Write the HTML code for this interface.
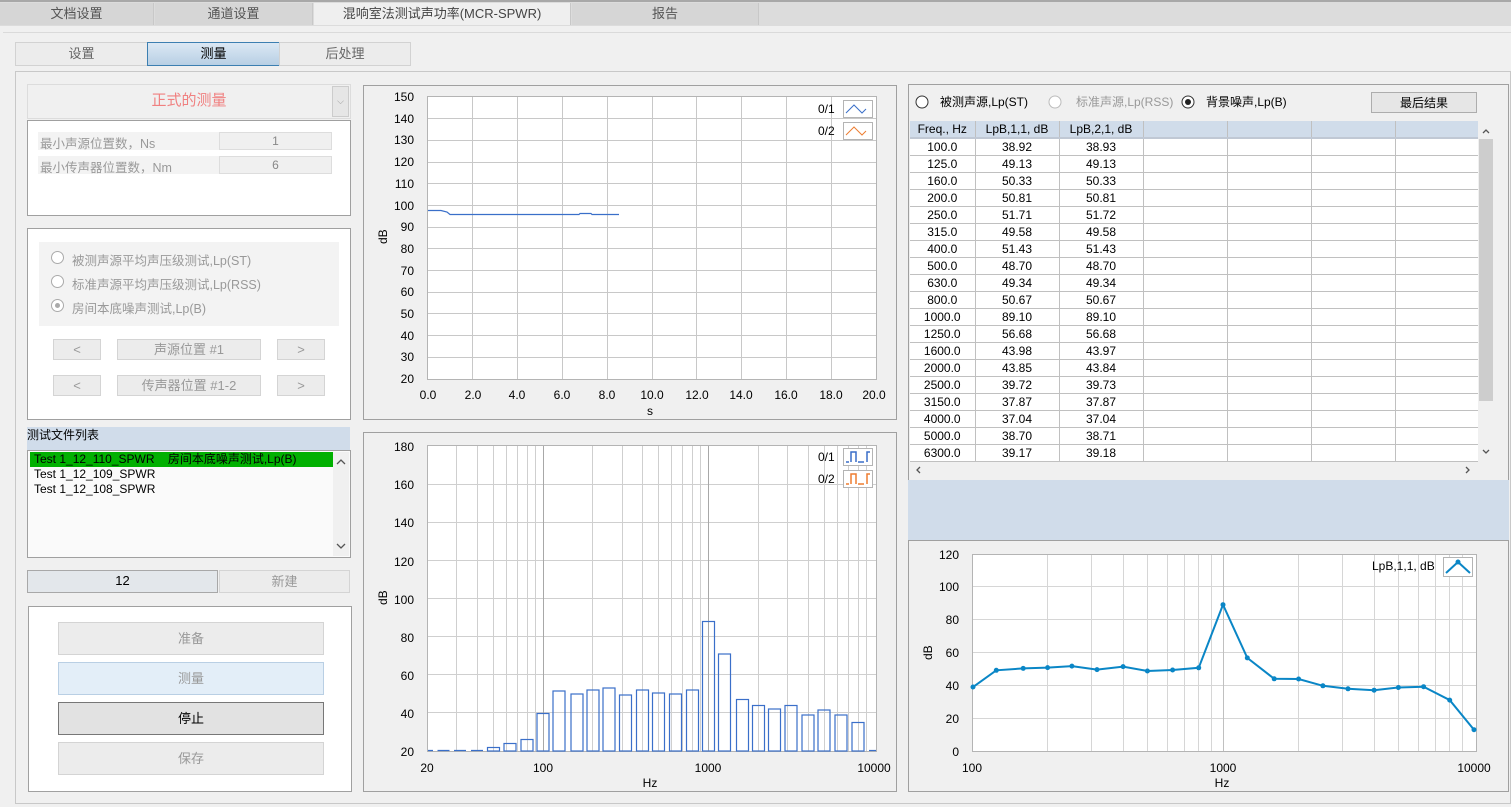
<!DOCTYPE html>
<html><head><meta charset="utf-8"><style>
*{box-sizing:border-box;margin:0;padding:0}
body{width:1511px;height:807px;background:#f0f0f0;font-family:"Liberation Sans","Noto Sans CJK SC",sans-serif;font-size:12px;color:#000;position:relative;overflow:hidden}
.a{position:absolute}
.tab{position:absolute;top:3px;height:22px;background:#d6d6d6;border-right:1px solid #c8c8c8;color:#555;font-size:13px;text-align:center;line-height:22px}
.st{position:absolute;top:42px;height:24px;background:#ececec;border:1px solid #d2d2d2;color:#666;font-size:13px;text-align:center;line-height:22px}
.box{position:absolute;background:#fff;border:1px solid #a0a0a0}
.btn{position:absolute;background:#ececec;border:1px solid #d4d4d4;color:#999;text-align:center;font-size:13px}
.rad{position:absolute;width:13px;height:13px;border:1px solid #aaa;border-radius:50%;background:#fff}
.g{color:#999;font-size:12.5px}
.panel{position:absolute;border:1px solid #a0a0a0;background:#f0f0f0}
svg text{font-family:"Liberation Sans",sans-serif;font-size:12px;fill:#000}
table{border-collapse:collapse}
td{border-right:1px solid #c0c0c0;border-bottom:1px solid #c0c0c0;height:17px;text-align:center;font-size:12px;padding:0;line-height:16px}
</style></head><body>
<div class="a" style="left:0;top:0;width:1511px;height:2px;background:#a8a8a8"></div>
<div class="a" style="left:0;top:2px;width:1511px;height:24px;background:#dcdcdc"></div>
<div class="tab" style="left:0;width:154px">文档设置</div>
<div class="tab" style="left:155px;width:158px">通道设置</div>
<div class="tab" style="left:314px;width:257px;background:#efefef;color:#444">混响室法测试声功率(MCR-SPWR)</div>
<div class="tab" style="left:572px;width:187px">报告</div>
<div class="a" style="left:3px;top:32px;width:1508px;height:775px;background:#f0f0f0;border-top:1px solid #dadada"></div>
<div class="st" style="left:15px;width:133px">设置</div>
<div class="st" style="left:147px;width:133px;background:linear-gradient(#dbe8f4,#b8cfe4);border-color:#3c7fb1;color:#000">测量</div>
<div class="st" style="left:279px;width:132px">后处理</div>
<div class="a" style="left:15px;top:71px;width:1496px;height:733px;border:1px solid #c8c8c8;background:#f0f0f0"></div>

<!-- left -->
<div class="a" style="left:27px;top:84px;width:324px;height:35px;background:#f0f0f0;border:1px solid #dcdcdc;text-align:center;line-height:32px;font-size:15px;color:#f08080">正式的测量</div>
<div class="a" style="left:332px;top:86px;width:17px;height:31px;background:#e6e6e6;border:1px solid #ccc;color:#999;text-align:center;line-height:29px;font-size:9px">⌵</div>
<div class="box" style="left:27px;top:120px;width:324px;height:96px"></div>
<div class="a" style="left:38px;top:132px;width:293px;height:18px;background:#f3f3f3"></div>
<div class="a g" style="left:40px;top:133px">最小声源位置数，Ns</div>
<div class="a" style="left:219px;top:132px;width:113px;height:18px;background:#f0f0f0;border:1px solid #ddd;text-align:center;color:#888;line-height:16px">1</div>
<div class="a" style="left:38px;top:156px;width:293px;height:18px;background:#f3f3f3"></div>
<div class="a g" style="left:40px;top:157px">最小传声器位置数，Nm</div>
<div class="a" style="left:219px;top:156px;width:113px;height:18px;background:#f0f0f0;border:1px solid #ddd;text-align:center;color:#888;line-height:16px">6</div>

<div class="box" style="left:27px;top:228px;width:324px;height:192px"></div>
<div class="a" style="left:39px;top:242px;width:300px;height:84px;background:#f3f3f3"></div>
<div class="rad" style="left:51px;top:251px"></div><div class="a g" style="left:72px;top:250px">被测声源平均声压级测试,Lp(ST)</div>
<div class="rad" style="left:51px;top:275px"></div><div class="a g" style="left:72px;top:274px">标准声源平均声压级测试,Lp(RSS)</div>
<div class="rad" style="left:51px;top:299px"></div><div class="a" style="left:55px;top:303px;width:5px;height:5px;border-radius:50%;background:#aaa"></div><div class="a g" style="left:72px;top:298px">房间本底噪声测试,Lp(B)</div>
<div class="btn" style="left:53px;top:339px;width:48px;height:21px;line-height:19px">&lt;</div>
<div class="btn" style="left:117px;top:339px;width:144px;height:21px;line-height:19px">声源位置 #1</div>
<div class="btn" style="left:277px;top:339px;width:48px;height:21px;line-height:19px">&gt;</div>
<div class="btn" style="left:53px;top:375px;width:48px;height:21px;line-height:19px">&lt;</div>
<div class="btn" style="left:117px;top:375px;width:144px;height:21px;line-height:19px">传声器位置 #1-2</div>
<div class="btn" style="left:277px;top:375px;width:48px;height:21px;line-height:19px">&gt;</div>

<div class="a" style="left:27px;top:427px;width:323px;height:23px;background:#d0dcea;line-height:17px">测试文件列表</div>
<div class="a" style="left:27px;top:450px;width:324px;height:108px;border:1px solid #a0a0a0;background:#fafafa"></div>
<div class="a" style="left:30px;top:452px;width:303px;height:15px;background:#00b000;line-height:15px;padding-left:4px">Test 1_12_110_SPWR&nbsp;&nbsp;&nbsp;&nbsp;房间本底噪声测试,Lp(B)</div>
<div class="a" style="left:34px;top:467px;line-height:15px">Test 1_12_109_SPWR<br>Test 1_12_108_SPWR</div>
<div class="a" style="left:333px;top:452px;width:16px;height:104px;background:#f0f0f0"></div>
<svg class="a" style="left:333px;top:452px" width="16" height="104"><path d="M4 12L8 8L12 12M4 92L8 96L12 92" fill="none" stroke="#555" stroke-width="1.3"/></svg>

<div class="a" style="left:27px;top:570px;width:191px;height:23px;background:#e3e7eb;border:1px solid #a8a8a8;text-align:center;line-height:20px;font-size:13px">12</div>
<div class="btn" style="left:219px;top:570px;width:131px;height:23px;line-height:21px">新建</div>

<div class="box" style="left:28px;top:606px;width:324px;height:186px"></div>
<div class="btn" style="left:58px;top:622px;width:266px;height:33px;line-height:31px">准备</div>
<div class="btn" style="left:58px;top:662px;width:266px;height:33px;line-height:31px;background:#e3eef8;border-color:#b9cfe4">测量</div>
<div class="btn" style="left:58px;top:702px;width:266px;height:33px;line-height:31px;background:#e2e2e2;border-color:#777;color:#000">停止</div>
<div class="btn" style="left:58px;top:742px;width:266px;height:33px;line-height:31px">保存</div>

<!-- chart1 -->
<div class="panel" style="left:363px;top:85px;width:534px;height:335px"></div>
<svg class="a" style="left:0;top:0" width="1511" height="807">
<rect x="427.5" y="96.5" width="449" height="283" fill="#fff" stroke="#b4b4b4"/>
<g stroke="#c8c8c8" stroke-width="1">
<path d="M428 118.5H876M428 140.5H876M428 162.5H876M428 183.5H876M428 205.5H876M428 227.5H876M428 248.5H876M428 270.5H876M428 292.5H876M428 313.5H876M428 335.5H876M428 357.5H876"/>
<path d="M472.5 97V379M517.5 97V379M562.5 97V379M607.5 97V379M652.5 97V379M696.5 97V379M741.5 97V379M786.5 97V379M831.5 97V379"/>
</g>
<path d="M428 210.5H441L447 212L450 214.5H579L580 213.5H591L592 214.5H619" fill="none" stroke="#3a6fc9" stroke-width="1.2"/>
<g text-anchor="end"><text x="414" y="101">150</text><text x="414" y="123">140</text><text x="414" y="144">130</text><text x="414" y="166">120</text><text x="414" y="188">110</text><text x="414" y="210">100</text><text x="414" y="231">90</text><text x="414" y="253">80</text><text x="414" y="275">70</text><text x="414" y="296">60</text><text x="414" y="318">50</text><text x="414" y="340">40</text><text x="414" y="361">30</text><text x="414" y="383">20</text></g>
<g text-anchor="middle"><text x="428" y="399">0.0</text><text x="473" y="399">2.0</text><text x="517" y="399">4.0</text><text x="562" y="399">6.0</text><text x="607" y="399">8.0</text><text x="652" y="399">10.0</text><text x="697" y="399">12.0</text><text x="741" y="399">14.0</text><text x="786" y="399">16.0</text><text x="831" y="399">18.0</text><text x="874" y="399">20.0</text><text x="650" y="415">s</text></g>
<text transform="translate(387,244) rotate(-90)">dB</text>
<text x="818" y="113">0/1</text><text x="818" y="135">0/2</text>
<rect x="843.5" y="100.5" width="29" height="17" fill="#fff" stroke="#b4b4b4"/><path d="M846 113L854 105L862 113L866 109" fill="none" stroke="#3a6fc9"/>
<rect x="843.5" y="122.5" width="29" height="17" fill="#fff" stroke="#b4b4b4"/><path d="M846 135L854 127L862 135L866 131" fill="none" stroke="#ed7d31"/>

<!-- chart2 -->
<rect x="363.5" y="432.5" width="533" height="359" fill="#f0f0f0" stroke="#a0a0a0"/>
<rect x="427.5" y="445.5" width="449" height="306" fill="#fff" stroke="#b4b4b4"/>
<g stroke="#cfcfcf"><path d="M428 484.5H876M428 522.5H876M428 560.5H876M428 598.5H876M428 636.5H876M428 674.5H876M428 712.5H876"/>
<path d="M456.5 446V751M477.5 446V751M493.5 446V751M506.5 446V751M517.5 446V751M527.5 446V751M535.5 446V751M592.5 446V751M622.5 446V751M642.5 446V751M658.5 446V751M671.5 446V751M682.5 446V751M692.5 446V751M700.5 446V751M758.5 446V751M787.5 446V751M808.5 446V751M824.5 446V751M837.5 446V751M848.5 446V751M858.5 446V751M866.5 446V751"/></g>
<path d="M543.5 446V751M708.5 446V751" stroke="#a8a8a8"/>
<g fill="none" stroke="#3a6fc9" stroke-width="1.2">
<path d="M428 750.5H433M437.5 750.5H449.5M454 750.5H466M471 750.5H483"/>
<rect x="487.5" y="747.5" width="12" height="3.5"/><rect x="504" y="743.5" width="12" height="7.5"/><rect x="521" y="739.5" width="12" height="11.5"/>
<rect x="537" y="713.5" width="12" height="37.5"/><rect x="553" y="691" width="12" height="60"/><rect x="571" y="694" width="12" height="57"/><rect x="587" y="690" width="12" height="61"/><rect x="603" y="688" width="12" height="63"/><rect x="619.5" y="695" width="12" height="56"/><rect x="636.5" y="690" width="12" height="61"/><rect x="652.5" y="693" width="12" height="58"/><rect x="669.5" y="694" width="12" height="57"/><rect x="686.5" y="690" width="12" height="61"/><rect x="702.5" y="621.5" width="12" height="129.5"/><rect x="718.5" y="654" width="12" height="97"/><rect x="736.5" y="699.5" width="12" height="51.5"/><rect x="752.5" y="705.5" width="12" height="45.5"/><rect x="768.5" y="709" width="12" height="42"/><rect x="785" y="705.5" width="12" height="45.5"/><rect x="802" y="715" width="12" height="36"/><rect x="818" y="710" width="12" height="41"/><rect x="835" y="715" width="12" height="36"/><rect x="852" y="722.5" width="12" height="28.5"/><path d="M869 750.5H876"/>
</g>
<g text-anchor="end"><text x="414" y="451">180</text><text x="414" y="489">160</text><text x="414" y="527">140</text><text x="414" y="566">120</text><text x="414" y="604">100</text><text x="414" y="642">80</text><text x="414" y="680">60</text><text x="414" y="718">40</text><text x="414" y="756">20</text></g>
<g text-anchor="middle"><text x="427" y="772">20</text><text x="543" y="772">100</text><text x="708" y="772">1000</text><text x="874" y="772">10000</text><text x="650" y="787">Hz</text></g>
<text transform="translate(387,605) rotate(-90)">dB</text>
<text x="818" y="461">0/1</text><text x="818" y="483">0/2</text>
<rect x="843.5" y="448.5" width="29" height="17" fill="#fff" stroke="#b4b4b4"/><path d="M846 462H849M851 462V452H856V462M858 462H864M867 462V452H870" fill="none" stroke="#3a6fc9" stroke-width="1.5"/>
<rect x="843.5" y="470.5" width="29" height="17" fill="#fff" stroke="#b4b4b4"/><path d="M846 484H849M851 484V474H856V484M858 484H864M867 484V474H870" fill="none" stroke="#ed7d31" stroke-width="1.5"/>

<!-- right table panel -->
<rect x="908.5" y="84.5" width="600" height="396" fill="#f0f0f0" stroke="#a0a0a0"/>
<rect x="908" y="480" width="601" height="60" fill="#d0dcea"/>
<rect x="908.5" y="540.5" width="600" height="251" fill="#f0f0f0" stroke="#a0a0a0"/>
<circle cx="922" cy="102" r="6" fill="#fff" stroke="#333"/>
<text x="940" y="106">被测声源,Lp(ST)</text>
<circle cx="1055" cy="102" r="6" fill="#fff" stroke="#bbb"/>
<text x="1076" y="106" style="fill:#999">标准声源,Lp(RSS)</text>
<circle cx="1188" cy="102" r="6" fill="#fff" stroke="#333"/><circle cx="1188" cy="102" r="3" fill="#222"/>
<text x="1206" y="106">背景噪声,Lp(B)</text>
<rect x="1371.5" y="92.5" width="105" height="20" fill="#e6e6e6" stroke="#adadad"/>
<text x="1424" y="107" text-anchor="middle">最后结果</text>
<rect x="1478" y="121" width="16" height="341" fill="#f0f0f0"/>
<rect x="1479" y="139" width="14" height="262" fill="#cdcdcd"/>
<path d="M1483 133L1486 130L1489 133M1483 450L1486 453L1489 450" fill="none" stroke="#555" stroke-width="1.3"/>
<rect x="909" y="462" width="585" height="17" fill="#f0f0f0"/>
<path d="M920 467L917 470L920 473M1466 467L1469 470L1466 473" fill="none" stroke="#555" stroke-width="1.3"/>

<!-- chart3 -->
<rect x="972.5" y="554.5" width="504" height="197" fill="#fff" stroke="#b4b4b4"/>
<g stroke="#d6d6d6"><path d="M973 586.5H1476M973 619.5H1476M973 652.5H1476M973 685.5H1476M973 718.5H1476"/>
<path d="M1047.5 555V751M1091.5 555V751M1123.5 555V751M1147.5 555V751M1167.5 555V751M1184.5 555V751M1198.5 555V751M1211.5 555V751M1298.5 555V751M1342.5 555V751M1374.5 555V751M1398.5 555V751M1418.5 555V751M1435.5 555V751M1449.5 555V751M1462.5 555V751"/></g>
<path d="M1223.5 555V751" stroke="#c0c0c0"/>
<g fill="#0a86c6"><path d="M973 687.1L996.3 670.3L1023.2 668.4L1047.6 667.6L1071.9 666.1L1097 669.6L1123.1 666.6L1147.4 671L1172.6 670L1198.7 667.8L1223 604.7L1247.3 657.9L1274.2 678.8L1298.6 679L1322.9 685.8L1348 688.8L1374.1 690.2L1398.4 687.5L1423.6 686.7L1449.7 700.1L1474 729.7" fill="none" stroke="#0a86c6" stroke-width="2"/>
<circle cx="973" cy="687" r="2.5"/><circle cx="996.3" cy="670.3" r="2.5"/><circle cx="1023.2" cy="668.4" r="2.5"/><circle cx="1047.6" cy="667.6" r="2.5"/><circle cx="1071.9" cy="666.1" r="2.5"/><circle cx="1097" cy="669.6" r="2.5"/><circle cx="1123.1" cy="666.6" r="2.5"/><circle cx="1147.4" cy="671" r="2.5"/><circle cx="1172.6" cy="670" r="2.5"/><circle cx="1198.7" cy="667.8" r="2.5"/><circle cx="1223" cy="604.7" r="2.5"/><circle cx="1247.3" cy="657.9" r="2.5"/><circle cx="1274.2" cy="678.8" r="2.5"/><circle cx="1298.6" cy="679" r="2.5"/><circle cx="1322.9" cy="685.8" r="2.5"/><circle cx="1348" cy="688.8" r="2.5"/><circle cx="1374.1" cy="690.2" r="2.5"/><circle cx="1398.4" cy="687.5" r="2.5"/><circle cx="1423.6" cy="686.7" r="2.5"/><circle cx="1449.7" cy="700.1" r="2.5"/><circle cx="1474" cy="729.7" r="2.5"/></g>
<g text-anchor="end"><text x="959" y="559">120</text><text x="959" y="591">100</text><text x="959" y="624">80</text><text x="959" y="657">60</text><text x="959" y="690">40</text><text x="959" y="723">20</text><text x="959" y="756">0</text></g>
<g text-anchor="middle"><text x="972" y="772">100</text><text x="1223" y="772">1000</text><text x="1474" y="772">10000</text><text x="1222" y="787">Hz</text></g>
<text transform="translate(932,660) rotate(-90)">dB</text>
<text x="1372" y="570">LpB,1,1, dB</text>
<rect x="1443.5" y="557.5" width="29" height="19" fill="#fff" stroke="#b4b4b4"/><path d="M1446 573L1458 562L1470 573" fill="none" stroke="#0a86c6" stroke-width="2"/><circle cx="1458" cy="562" r="2.5" fill="#0a86c6"/>
</svg>

<div class="a" style="left:910px;top:121px;width:568px;height:341px;background:#fff;overflow:hidden">
<table style="width:568px;table-layout:fixed">
<colgroup><col style="width:65px"><col style="width:84px"><col style="width:84px"><col style="width:84px"><col style="width:84px"><col style="width:84px"><col style="width:83px"></colgroup>
<tr style="background:#d0dcea"><td style="border-bottom:2px solid #c0c8d4">Freq., Hz</td><td style="border-bottom:2px solid #c0c8d4">LpB,1,1, dB</td><td style="border-bottom:2px solid #c0c8d4">LpB,2,1, dB</td><td style="border-bottom:2px solid #c0c8d4"></td><td style="border-bottom:2px solid #c0c8d4"></td><td style="border-bottom:2px solid #c0c8d4"></td><td style="border-bottom:2px solid #c0c8d4"></td></tr>
<tr><td>100.0</td><td>38.92</td><td>38.93</td><td></td><td></td><td></td><td></td></tr>
<tr><td>125.0</td><td>49.13</td><td>49.13</td><td></td><td></td><td></td><td></td></tr>
<tr><td>160.0</td><td>50.33</td><td>50.33</td><td></td><td></td><td></td><td></td></tr>
<tr><td>200.0</td><td>50.81</td><td>50.81</td><td></td><td></td><td></td><td></td></tr>
<tr><td>250.0</td><td>51.71</td><td>51.72</td><td></td><td></td><td></td><td></td></tr>
<tr><td>315.0</td><td>49.58</td><td>49.58</td><td></td><td></td><td></td><td></td></tr>
<tr><td>400.0</td><td>51.43</td><td>51.43</td><td></td><td></td><td></td><td></td></tr>
<tr><td>500.0</td><td>48.70</td><td>48.70</td><td></td><td></td><td></td><td></td></tr>
<tr><td>630.0</td><td>49.34</td><td>49.34</td><td></td><td></td><td></td><td></td></tr>
<tr><td>800.0</td><td>50.67</td><td>50.67</td><td></td><td></td><td></td><td></td></tr>
<tr><td>1000.0</td><td>89.10</td><td>89.10</td><td></td><td></td><td></td><td></td></tr>
<tr><td>1250.0</td><td>56.68</td><td>56.68</td><td></td><td></td><td></td><td></td></tr>
<tr><td>1600.0</td><td>43.98</td><td>43.97</td><td></td><td></td><td></td><td></td></tr>
<tr><td>2000.0</td><td>43.85</td><td>43.84</td><td></td><td></td><td></td><td></td></tr>
<tr><td>2500.0</td><td>39.72</td><td>39.73</td><td></td><td></td><td></td><td></td></tr>
<tr><td>3150.0</td><td>37.87</td><td>37.87</td><td></td><td></td><td></td><td></td></tr>
<tr><td>4000.0</td><td>37.04</td><td>37.04</td><td></td><td></td><td></td><td></td></tr>
<tr><td>5000.0</td><td>38.70</td><td>38.71</td><td></td><td></td><td></td><td></td></tr>
<tr><td>6300.0</td><td>39.17</td><td>39.18</td><td></td><td></td><td></td><td></td></tr>
</table></div>
</body></html>
